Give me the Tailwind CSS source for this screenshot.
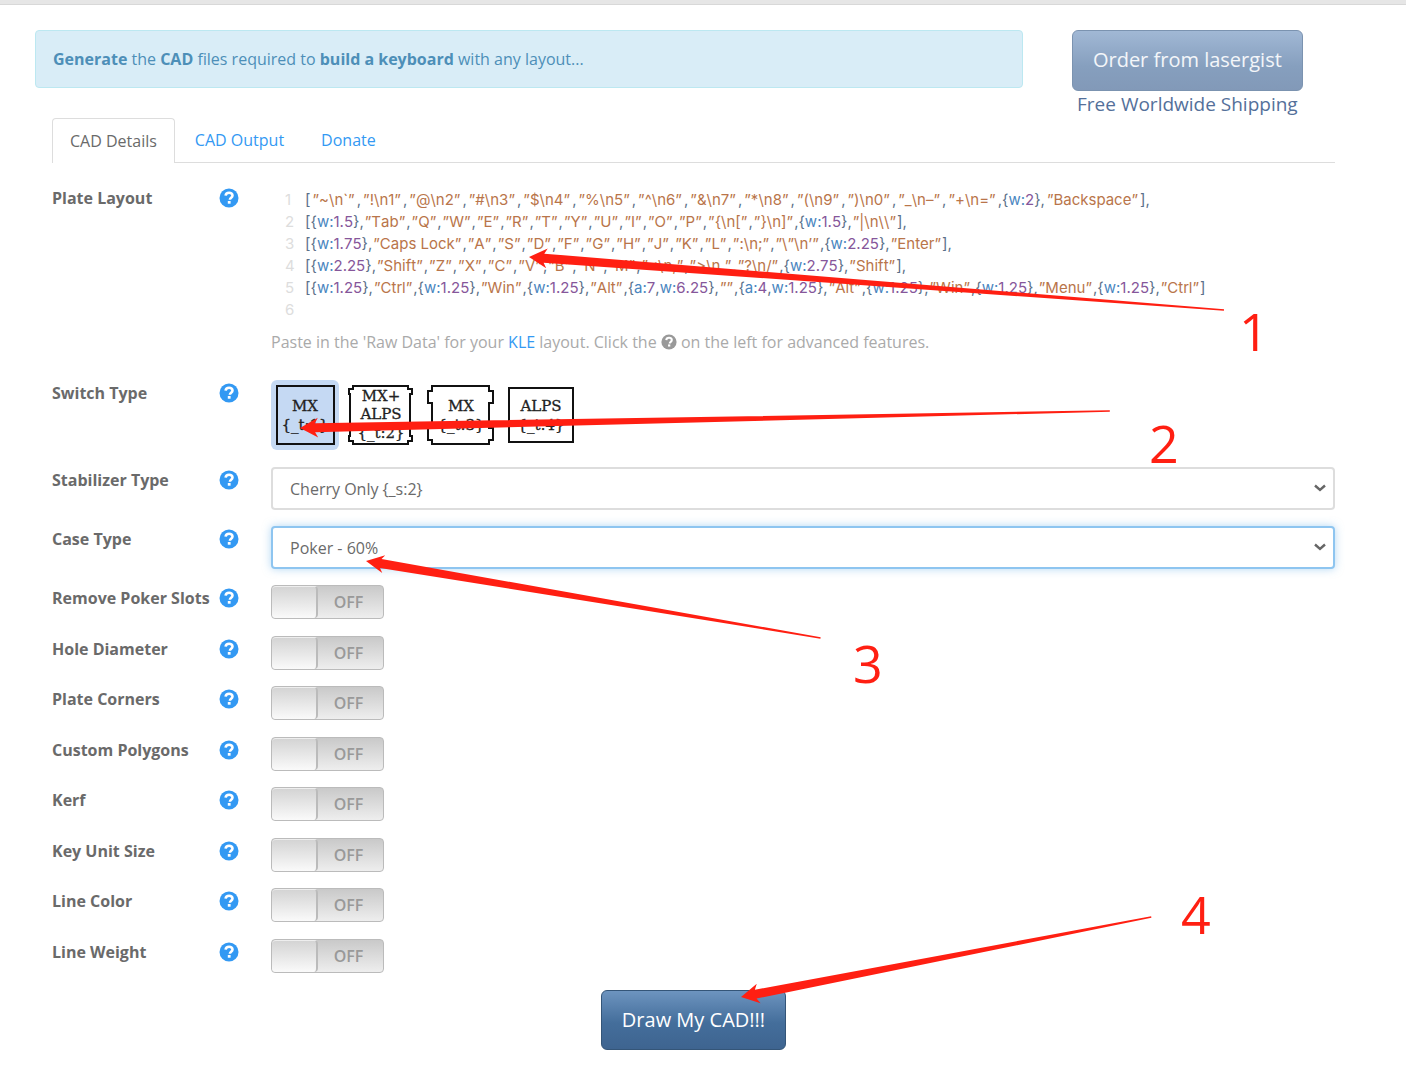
<!DOCTYPE html>
<html lang="en">
<head>
<meta charset="utf-8">
<title>Keyboard CAD Builder</title>
<script src="https://cdn.jsdelivr.net/npm/@tailwindcss/browser@4"></script>
</head>
<body class="relative overflow-x-hidden bg-white font-['Open_Sans','Noto_Sans',sans-serif] text-base leading-6 text-[#6a6a6a]">
<svg class="hidden">
  <symbol id="help" viewBox="0 0 20 20">
    <circle cx="10" cy="10" r="9.5" fill="currentColor"/>
    <path d="M6.600 7.600C6.800 5.500 8.200 4.700 10.100 4.700c2 0 3.400 1.100 3.400 2.800 0 2.300-2.600 2.300-2.600 4.300" fill="none" stroke="#fff" stroke-width="2.600"/>
    <rect x="8.800" y="13" width="2.800" height="2.700" fill="#fff"/>
  </symbol>
  <symbol id="chevron" viewBox="0 0 12 8">
    <path d="M1 1.500 6 6 11 1.500" fill="none" stroke="#666" stroke-width="2.400"/>
  </symbol>
</svg>

<div class="h-[5px] border-b border-[#d8d8d8] bg-[#e6e6e6]"></div>

<div class="ml-[35px] mr-[54px] pt-[25px]">
  <header class="flex h-[88px] items-start">
    <p class="w-3/4 rounded border border-[#bce8f1] bg-[#d9edf7] px-[17px] py-4 text-[#4d8fb8]"><b>Generate</b> the <b>CAD</b> files required to <b>build a keyboard</b> with any layout...</p>
    <div class="flex w-1/4 flex-col items-center">
      <button type="button" class="h-[61px] rounded-md border border-[#7b93b0] bg-linear-to-b from-[#a1b8d5] via-[#869fbe] via-60% to-[#8299b8] px-5 pb-px text-xl text-white/90">Order from lasergist</button>
      <a href="#shipping" class="text-[19px] leading-[27px] text-[#54709a]">Free Worldwide Shipping</a>
    </div>
  </header>

  <main class="px-[17px]">
    <nav class="flex border-b border-[#ddd]">
      <a href="#details" class="-mb-px rounded-t border border-b-0 border-[#ddd] bg-white px-[17px] py-[10px]">CAD Details</a>
      <a href="#output" class="px-5 py-[10px] text-[#3399f3]">CAD Output</a>
      <a href="#donate" class="px-[17px] py-[10px] text-[#3399f3]">Donate</a>
    </nav>

    <form class="pt-[22px]">
      <section class="grid grid-cols-[167px_52px_1fr]">
        <h2 class="pt-px font-bold">Plate Layout</h2>
        <a href="#help-layout" aria-label="Help" class="pt-[3px] text-[#3399f3]"><svg class="size-5"><use href="#help"/></svg></a>
        <div>
          <ol id="code" class="pt-1 font-['Inter',sans-serif] text-[15px] leading-[22px] text-[#5b7089] [font-kerning:none]"></ol>
          <p class="mt-[9px] text-[#aaa]">Paste in the 'Raw Data' for your <a href="#kle" class="text-[#3399f3]">KLE</a> layout. Click the <svg class="inline size-4 -translate-y-0.5 text-[#999]"><use href="#help"/></svg> on the left for advanced features.</p>
        </div>
      </section>

      <section class="mt-[26px] grid grid-cols-[167px_52px_1fr]">
        <h2 class="pt-px font-bold">Switch Type</h2>
        <a href="#help-switch" aria-label="Help" class="pt-[3px] text-[#3399f3]"><svg class="size-5"><use href="#help"/></svg></a>
        <div class="flex h-[70px] gap-[5px] font-['DejaVu_Serif',serif] text-[15px]">
          <label class="w-[68px] rounded-md bg-[#c5d9f3]"><input type="radio" name="switch" checked class="sr-only">
            <svg viewBox="0 0 68 70" class="h-[70px] w-[68px]" fill="none" stroke="#111" stroke-width="2"><path d="M6 6h57v58H6z"/><g fill="#222" stroke="#222" stroke-width=".3" text-anchor="middle"><text x="34" y="31">MX</text><text x="34" y="50">{_t:1}</text></g></svg></label>
          <label class="w-[75px]"><input type="radio" name="switch" class="sr-only">
            <svg viewBox="0 0 75 70" class="h-[70px] w-[75px]" fill="none" stroke="#111" stroke-width="2"><path d="M9 6h55v3h4v5h-2v42h2v5h-4v3H9v-3H5v-5h1V14H5V9h4z"/><g fill="#222" stroke="#222" stroke-width=".3" text-anchor="middle"><text x="37" y="21">MX+</text><text x="37" y="39">ALPS</text><text x="37" y="58">{_t:2}</text></g></svg></label>
          <label class="w-[75px]"><input type="radio" name="switch" class="sr-only">
            <svg viewBox="0 0 75 70" class="h-[70px] w-[75px]" fill="none" stroke="#111" stroke-width="2"><path d="M8 6h57v5h4v12h-4v25h4v12h-4v4H8v-4H4V48h4V23H4V11h4z"/><g fill="#222" stroke="#222" stroke-width=".3" text-anchor="middle"><text x="37" y="31">MX</text><text x="37" y="50">{_t:3}</text></g></svg></label>
          <label class="w-[75px]"><input type="radio" name="switch" class="sr-only">
            <svg viewBox="0 0 75 70" class="h-[70px] w-[75px]" fill="none" stroke="#111" stroke-width="2"><path d="M5 8h64v54H5z"/><g fill="#222" stroke="#222" stroke-width=".3" text-anchor="middle"><text x="37" y="31">ALPS</text><text x="37" y="50">{_t:4}</text></g></svg></label>
        </div>
      </section>

      <section class="mt-[17px] grid grid-cols-[167px_52px_1fr]">
        <label for="stabilizer" class="pt-px font-bold">Stabilizer Type</label>
        <a href="#help-stabilizer" aria-label="Help" class="pt-[3px] text-[#3399f3]"><svg class="size-5"><use href="#help"/></svg></a>
        <div class="relative">
          <select id="stabilizer" class="block h-[43px] w-full appearance-none rounded border-2 border-[#ddd] bg-white px-[17px]"><option>Cherry Only {_s:2}</option></select>
          <svg class="pointer-events-none absolute right-[9px] top-[17px] h-2 w-3"><use href="#chevron"/></svg>
        </div>
      </section>

      <section class="mt-4 grid grid-cols-[167px_52px_1fr]">
        <label for="case" class="pt-px font-bold">Case Type</label>
        <a href="#help-case" aria-label="Help" class="pt-[3px] text-[#3399f3]"><svg class="size-5"><use href="#help"/></svg></a>
        <div class="relative">
          <select id="case" class="block h-[43px] w-full appearance-none rounded border-2 border-[#8ec5f0] bg-white px-[17px] shadow-[0_0_9px_rgba(102,175,233,0.5)]"><option>Poker - 60%</option></select>
          <svg class="pointer-events-none absolute right-[9px] top-[17px] h-2 w-3"><use href="#chevron"/></svg>
        </div>
      </section>

      <div id="toggles"></div>

      <div class="mt-[17px] flex justify-center">
        <button type="submit" class="h-[60px] rounded-md border border-[#345578] bg-linear-to-b from-[#6d94bf] via-[#446e9b] via-55% to-[#3e6490] px-5 text-xl text-white">Draw My CAD!!!</button>
      </div>
    </form>
  </main>
</div>

<svg class="pointer-events-none absolute left-0 top-0 h-[1069px] w-[1406px] font-['Open_Sans','Noto_Sans',sans-serif] text-[52px]" fill="#ff1f12">
  <path transform="translate(529 257) rotate(4.360)" d="M0 0 18-10 15-4.500 697-.7V.7L15 4.500 18 10z"/>
  <path transform="translate(300 428) rotate(-1.200)" d="M0 0 18-10 15-4.500 810-.7V.7L15 4.500 18 10z"/>
  <path transform="translate(366 561) rotate(9.610)" d="M0 0 18-9 15-4.500 461-.7V.7L15 4.500 18 9z"/>
  <path transform="translate(741 997) rotate(-11.040)" d="M0 0 18-10 15-4.500 418-.7V.7L15 4.500 18 10z"/>
  <text x="1239" y="351">1</text>
  <text x="1149" y="463">2</text>
  <text x="853" y="683">3</text>
  <text x="1181" y="934">4</text>
</svg>

<script>
// Raw layout rows, coloured by token kind
const rows = String.raw`[”~\n‵”,”!\n1”,”@\n2”,”#\n3”,”$\n4”,”%\n5”,”^\n6”,”&\n7”,”*\n8”,”(\n9”,”)\n0”,”_\n–”,”+\n=”,{w:2},”Backspace”],
[{w:1.5},”Tab”,”Q”,”W”,”E”,”R”,”T”,”Y”,”U”,”I”,”O”,”P”,”{\n[”,”}\n]”,{w:1.5},”|\n\\”],
[{w:1.75},”Caps Lock”,”A”,”S”,”D”,”F”,”G”,”H”,”J”,”K”,”L”,”:\n;”,”\”\n’”,{w:2.25},”Enter”],
[{w:2.25},”Shift”,”Z”,”X”,”C”,”V”,”B”,”N”,”M”,”<\n,”,”>\n.”,”?\n/”,{w:2.75},”Shift”],
[{w:1.25},”Ctrl”,{w:1.25},”Win”,{w:1.25},”Alt”,{a:7,w:6.25},””,{a:4,w:1.25},”Alt”,{w:1.25},”Win”,{w:1.25},”Menu”,{w:1.25},”Ctrl”]
`.replace('‵', '`').split('\n');
const esc = s => s.replace(/&/g, '&amp;').replace(/</g, '&lt;');
const paint = (s, pad) => s.replace(/”(?:\\.|[^”\\])*”|[a-z]:|[\d.]+|[^”a-z\d]+/g, t =>
  t[0] === '”' ? `<span class="${pad} text-[#b9754a]">${esc(t)}</span>` :
  /^[a-z]/.test(t) ? `<span class="text-[#4a86c0]">${t}</span>` :
  /^\d/.test(t) ? `<span class="text-[#86569a]">${t}</span>` : t);
document.getElementById('code').innerHTML = rows.map((r, i) =>
  `<li class="flex h-[22px] whitespace-pre"><span class="w-[34px] pl-[14px] text-[#ddd]">${i + 1}</span><span>${paint(r, i ? 'px-px' : 'px-[2px]')}</span></li>`).join('');

const options = ['Remove Poker Slots', 'Hole Diameter', 'Plate Corners', 'Custom Polygons', 'Kerf', 'Key Unit Size', 'Line Color', 'Line Weight'];
document.getElementById('toggles').innerHTML = options.map((name, i) => `
  <section class="grid grid-cols-[167px_52px_1fr] odd:mt-4 even:mt-[17px]">
    <label for="opt${i}" class="whitespace-nowrap pt-px font-bold">${name}</label>
    <a href="#help-opt${i}" aria-label="Help" class="pt-[3px] text-[#3399f3]"><svg class="size-5"><use href="#help"/></svg></a>
    <label class="flex h-[34px] w-[113px] overflow-hidden rounded border border-[#bbb] bg-linear-to-b from-[#c9c9c9] to-[#eee]">
      <input id="opt${i}" type="checkbox" class="sr-only">
      <span class="w-[46px] rounded border-r-2 border-t border-r-[#bbb] border-t-[#eee] bg-linear-to-b from-[#d4d4d4] to-[#fafafa]"></span>
      <span class="flex-1 pr-1 text-center leading-8 font-semibold text-[#999]">OFF</span>
    </label>
  </section>`).join('');
</script>
</body>
</html>
